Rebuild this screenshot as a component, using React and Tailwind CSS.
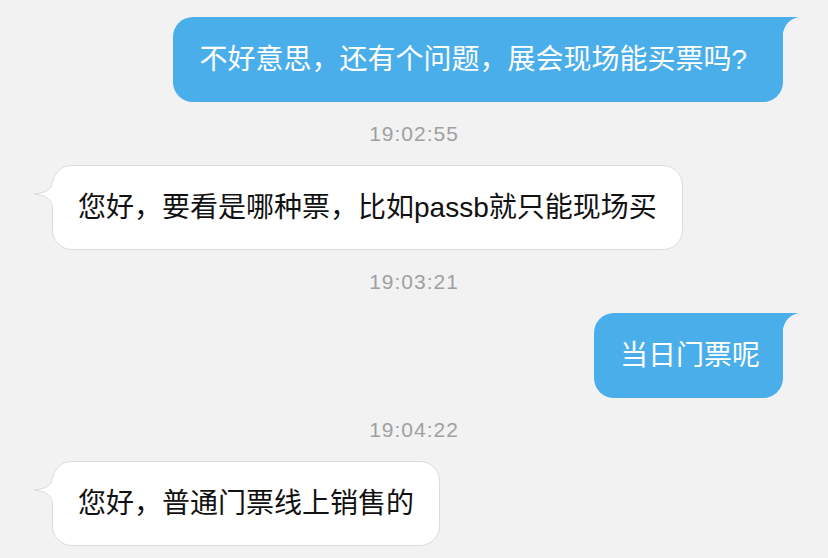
import React from 'react';

const messages = [
  { from: 'me', text: '不好意思，还有个问题，展会现场能买票吗?', pad: 'pr-[36px]' },
  { time: '19:02:55' },
  { from: 'them', text: '您好，要看是哪种票，比如passb就只能现场买' },
  { time: '19:03:21' },
  { from: 'me', text: '当日门票呢', pad: 'pr-[23px]' },
  { time: '19:04:22' },
  { from: 'them', text: '您好，普通门票线上销售的' },
];

function MyBubble({ text, pad }) {
  return (
    <div className="flex justify-end pr-[45px]">
      <div className={`relative h-[85px] flex items-center pl-[26px] ${pad} rounded-[20px] rounded-tr-none bg-[#4aaeeb] text-white text-[28px] leading-none whitespace-nowrap`}>
        {text}
        {/* tail at the top right */}
        <svg className="absolute top-0 right-[-16px]" width="17" height="18" viewBox="0 0 17 18">
          <path d="M0 0 H16.5 Q3 3 0.5 18 H0 Z" fill="#4aaeeb" />
        </svg>
      </div>
    </div>
  );
}

function TheirBubble({ text }) {
  return (
    <div className="flex justify-start pl-[52px]">
      <div className="relative h-[85px] flex items-center px-[25px] rounded-[20px] bg-white border border-[#dcdcdc] text-[#111] text-[28px] leading-none whitespace-nowrap">
        {text}
        {/* tail on the left */}
        <svg className="absolute top-[16px] left-[-20px]" width="22" height="26" viewBox="0 0 22 26">
          <path d="M19 0 C19 8 11 11 1 12 C9 13 18 15 19 25 H22 V0 Z" fill="#ffffff" />
          <path d="M19.5 0 C19.5 8 11 11 1 12 C9 13 18.5 15 19.5 25" fill="none" stroke="#dcdcdc" strokeWidth="1" />
        </svg>
      </div>
    </div>
  );
}

export default function App() {
  return (
    <div
      className="w-[828px] h-[558px] overflow-hidden bg-[#f2f2f2] pt-[17px] flex flex-col"
      style={{ fontFamily: '"Liberation Sans", "Noto Sans CJK SC", sans-serif' }}
    >
      {messages.map((m, i) =>
        m.time ? (
          <div key={i} className="h-[63px] flex items-center justify-center text-[21px] tracking-[1px] text-[#a0a0a0]">
            {m.time}
          </div>
        ) : m.from === 'me' ? (
          <MyBubble key={i} text={m.text} pad={m.pad} />
        ) : (
          <TheirBubble key={i} text={m.text} />
        )
      )}
    </div>
  );
}
